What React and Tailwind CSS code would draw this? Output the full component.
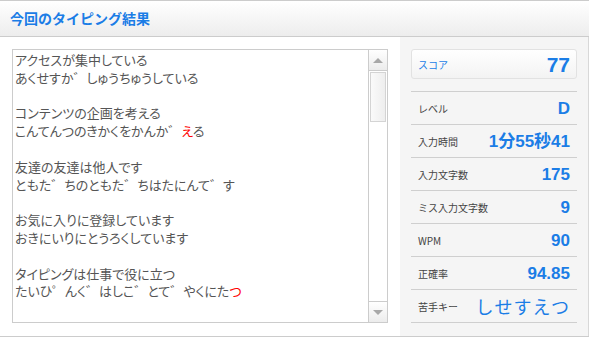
import React from "react";

const jp = { fontFamily: '"Noto Sans CJK JP", sans-serif' };

function Row({ label, children }) {
  return (
    <div className="flex h-[33px] items-center justify-between border-t border-[#cfcfcf] pl-[7px] pr-[7px]">
      <span className="text-[10px] text-[#444]" style={jp}>{label}</span>
      {children}
    </div>
  );
}

const val = "text-[17px] font-bold text-[#1b7de6] leading-none";
const valStyle = { fontFamily: '"Liberation Sans", "Noto Sans CJK JP", sans-serif' };

export default function App() {
  const lines = [
    ["アクセスが集中している"],
    ["あくせすか゛しゅうちゅうしている"],
    [""],
    ["コンテンツの企画を考える"],
    ["こんてんつのきかくをかんか゛", "え", "る"],
    [""],
    ["友達の友達は他人です"],
    ["ともた゛ちのともた゛ちはたにんて゛す"],
    [""],
    ["お気に入りに登録しています"],
    ["おきにいりにとうろくしています"],
    [""],
    ["タイピングは仕事で役に立つ"],
    ["たいひ゜んく゛はしこ゛とて゛やくにた", "つ", ""],
  ];
  return (
    <div className="w-[589px] h-[337px] bg-white border-t border-b border-[#cccccc] flex flex-col overflow-hidden">
      <div className="h-[36px] shrink-0 flex items-center pl-[10px] border-b border-[#cccccc] bg-gradient-to-b from-white to-[#ededed]">
        <span className="text-[14px] font-bold text-[#1b7de6]" style={jp}>今回のタイピング結果</span>
      </div>
      <div className="flex flex-1 min-h-0">
        <div className="w-[400px] shrink-0 bg-white pl-[12px] pt-[12px]">
          <div className="w-[376px] h-[274px] border border-[#cccccc] flex">
            <div
              className="flex-1 pl-[2px] pt-[1px] text-[13px] leading-[17.8px] text-[#555] [font-feature-settings:'palt'] whitespace-pre"
              style={jp}
            >
              {lines.map((l, i) => (
                <div key={i} className="h-[17.8px]">
                  {l[0]}
                  {l.length > 1 && <span className="text-[#ff0000]">{l[1]}</span>}
                  {l.length > 2 && l[2]}
                </div>
              ))}
            </div>
            <div className="w-[19px] border-l border-[#cccccc] flex flex-col bg-white">
              <div className="h-[21px] border-b border-[#cccccc] bg-gradient-to-b from-white to-[#ececec] flex items-center justify-center">
                <div className="w-0 h-0 border-l-[5px] border-r-[5px] border-b-[5px] border-l-transparent border-r-transparent border-b-[#a8a8a8]" />
              </div>
              <div className="mx-[1px] mt-[1px] h-[50px] border border-[#d4d4d4] bg-gradient-to-r from-[#fafafa] to-[#eeeeee]" />
              <div className="flex-1" />
              <div className="h-[21px] border-t border-[#cccccc] bg-gradient-to-b from-white to-[#ececec] flex items-center justify-center">
                <div className="w-0 h-0 border-l-[5px] border-r-[5px] border-t-[5px] border-l-transparent border-r-transparent border-t-[#a8a8a8]" />
              </div>
            </div>
          </div>
        </div>
        <div className="flex-1 bg-[#f5f5f5] border-r border-[#d8d8d8] pl-[11px] pr-[11px] pt-[12px]">
          <div className="h-[30px] rounded-[3px] border border-[#e2e2e2] bg-gradient-to-b from-white to-[#f3f3f3] flex items-center justify-between pl-[6px] pr-[6px]">
            <span className="text-[10px] text-[#1b7de6]" style={jp}>スコア</span>
            <span className="text-[21px] font-bold text-[#1b7de6] leading-none" style={valStyle}>77</span>
          </div>
          <div className="mt-[12px] border-b border-[#cfcfcf]">
            <Row label="レベル"><span className={val} style={valStyle}>D</span></Row>
            <Row label="入力時間"><span className={val} style={valStyle}>1分55秒41</span></Row>
            <Row label="入力文字数"><span className={val} style={valStyle}>175</span></Row>
            <Row label="ミス入力文字数"><span className={val} style={valStyle}>9</span></Row>
            <Row label="WPM"><span className={val} style={valStyle}>90</span></Row>
            <Row label="正確率"><span className={val} style={valStyle}>94.85</span></Row>
            <Row label="苦手キー">
              <span className="text-[18px] text-[#1b7de6] leading-none tracking-[1px]" style={jp}>しせすえつ</span>
            </Row>
          </div>
        </div>
      </div>
    </div>
  );
}
